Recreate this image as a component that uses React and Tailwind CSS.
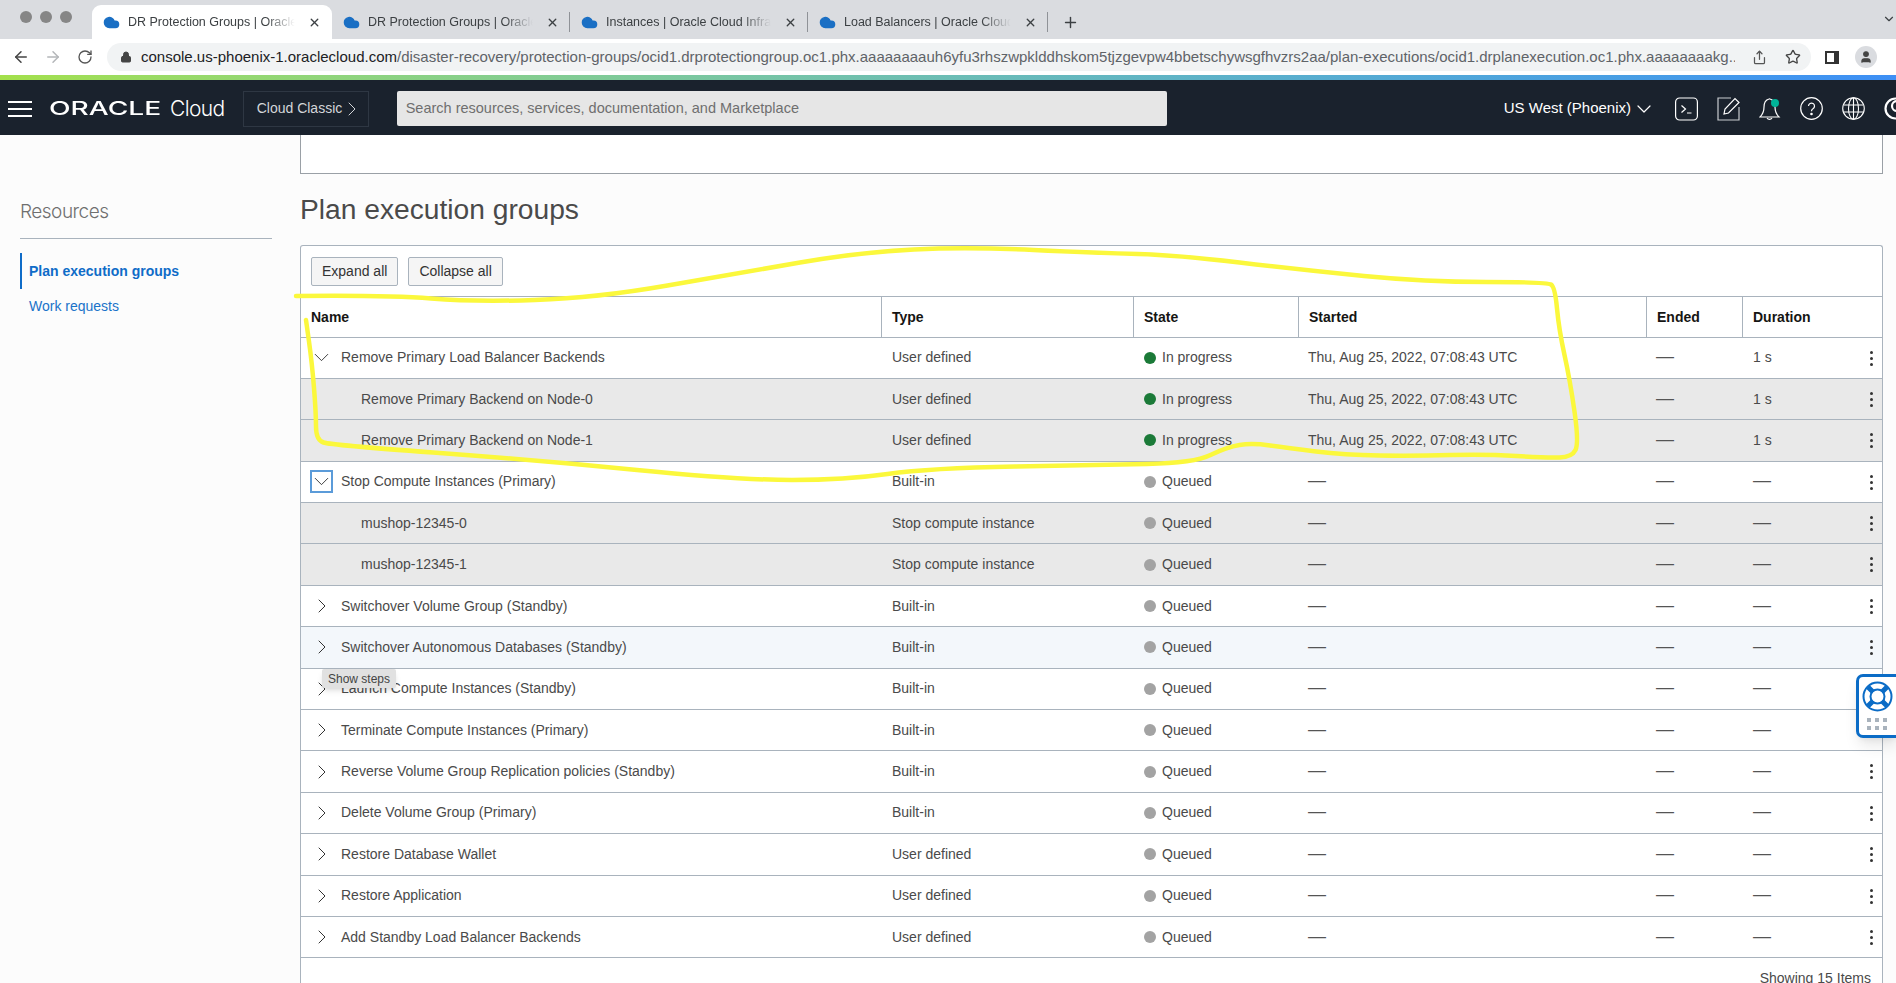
import React from "react"
import { ArrowLeft, ArrowRight, ChevronDown, ChevronRight, Cloud, Lock, Plus, RotateCw, Share, Star, User, X } from "lucide-react"

const sans = "font-['Liberation_Sans',Arial,sans-serif]"
const cols = "grid grid-cols-[580px_252px_165px_348px_96px_1fr]"

const groups = [
  { name: "Remove Primary Load Balancer Backends", type: "User defined", open: true, active: true },
  { name: "Remove Primary Backend on Node-0", type: "User defined", child: true, active: true },
  { name: "Remove Primary Backend on Node-1", type: "User defined", child: true, active: true },
  { name: "Stop Compute Instances (Primary)", type: "Built-in", open: true, focus: true },
  { name: "mushop-12345-0", type: "Stop compute instance", child: true },
  { name: "mushop-12345-1", type: "Stop compute instance", child: true },
  { name: "Switchover Volume Group (Standby)", type: "Built-in" },
  { name: "Switchover Autonomous Databases (Standby)", type: "Built-in", hover: true },
  { name: "Launch Compute Instances (Standby)", type: "Built-in" },
  { name: "Terminate Compute Instances (Primary)", type: "Built-in" },
  { name: "Reverse Volume Group Replication policies (Standby)", type: "Built-in" },
  { name: "Delete Volume Group (Primary)", type: "Built-in" },
  { name: "Restore Database Wallet", type: "User defined" },
  { name: "Restore Application", type: "User defined" },
  { name: "Add Standby Load Balancer Backends", type: "User defined" },
]

const tabs = [
  { title: "DR Protection Groups | Oracle Cloud", width: "w-[240px]", active: true },
  { title: "DR Protection Groups | Oracle Cloud", width: "w-[238px]", sep: true },
  { title: "Instances | Oracle Cloud Infrastructure", width: "w-[238px]", sep: true },
  { title: "Load Balancers | Oracle Cloud Infrastructure", width: "w-[240px]", sep: true },
]

// hand drawn marker line round the first rows
const marker = [
  [296, 296], [388, 295], [474, 302], [596, 298], [739, 273], [861, 252], [967, 247], [1100, 253], [1176, 255],
  [1303, 270], [1425, 282], [1547, 282], [1555, 287], [1559, 330], [1570, 380], [1579, 443], [1572, 457], [1547, 458],
  [1486, 454], [1415, 456], [1344, 455], [1288, 448], [1252, 443], [1227, 447], [1194, 463], [1100, 465], [930, 468],
  [845, 480], [739, 480], [535, 460], [331, 445], [316, 440], [316, 413], [312, 363], [306, 320],
]

const markerPath = () => {
  let d = `M${marker[0][0]} ${marker[0][1]}`
  for (let i = 1; i < marker.length - 1; i++) {
    const [x, y] = marker[i]
    const [nx, ny] = marker[i + 1]
    d += ` Q${x} ${y} ${(x + nx) / 2} ${(y + ny) / 2}`
  }
  const last = marker[marker.length - 1]
  return d + ` L${last[0]} ${last[1]}`
}

const Tab = ({ title, width, active, sep }) => (
  <div className={`${width} h-[34px] flex items-center pl-[11px] gap-[8px] rounded-t-[9px] ${active ? "bg-white" : ""}`}>
    <Cloud size={17} className="shrink-0 text-[#1a6fc4] fill-[#1a6fc4]" />
    <span className="flex-1 overflow-hidden whitespace-nowrap text-[12.5px] text-[#3c4043] [mask-image:linear-gradient(to_right,black_80%,transparent_97%)]">{title}</span>
    <X size={13} strokeWidth={2.5} className="shrink-0 text-[#3c4043]" />
    <span className={`w-px h-[20px] ml-[2px] ${sep ? "bg-[#8f9297]" : ""}`}></span>
  </div>
)

const Dash = () => <span className="text-[18px] leading-none text-[#555]">—</span>

const Kebab = () => (
  <div className="absolute right-[9px] top-[13px] flex flex-col gap-[3px]">
    <span className="size-[3px] rounded-full bg-[#333]"></span>
    <span className="size-[3px] rounded-full bg-[#333]"></span>
    <span className="size-[3px] rounded-full bg-[#333]"></span>
  </div>
)

const Row = ({ name, type, open, child, active, focus, hover }) => (
  <div className={`${cols} relative h-[41.4px] items-center border-b border-[#a9b3bd] text-[14px] text-[#4a4a4a] ${child ? "bg-[#e9e9e9]" : hover ? "bg-[#f3f7fb]" : ""}`}>
    <div className="flex items-center pl-[9px]">
      {child ? (
        <span className="pl-[51px]">{name}</span>
      ) : (
        <>
          <span className={`w-[23px] h-[23px] shrink-0 flex items-center justify-center text-[#333] ${focus ? "border-2 border-[#5b9bd9]" : ""}`}>
            {open ? <ChevronDown size={25} strokeWidth={0.9} className="shrink-0" /> : <ChevronRight size={24} strokeWidth={1} className="shrink-0" />}
          </span>
          <span className="pl-[8px]">{name}</span>
        </>
      )}
    </div>
    <div className="pl-[11px]">{type}</div>
    <div className="pl-[11px] flex items-center gap-[6px]">
      <span className={`size-[12px] rounded-full ${active ? "bg-[#1b7a38]" : "bg-[#a3a3a3]"}`}></span>
      {active ? "In progress" : "Queued"}
    </div>
    <div className="pl-[10px]">{active ? "Thu, Aug 25, 2022, 07:08:43 UTC" : <Dash />}</div>
    <div className="pl-[10px]"><Dash /></div>
    <div className="pl-[11px]">{active ? "1 s" : <Dash />}</div>
    <Kebab />
  </div>
)

const HeadCell = ({ children, first }) => (
  <div className={`h-full flex items-center pl-[10px] pt-[1px] ${first ? "" : "border-l border-[#a9b3bd]"}`}>{children}</div>
)

const NavIcons = () => (
  <div className="flex items-center gap-[19px] text-white [&>svg]:shrink-0">
    <svg width="23" height="24" viewBox="0 0 23 24" fill="none" stroke="currentColor" strokeWidth="1.2">
      <rect x="0.6" y="1" width="21.8" height="22" rx="4" />
      <path d="M6.5 8.5l4 3.5-4 3.5M12 16h4.5" />
    </svg>
    <svg width="23" height="25" viewBox="0 0 23 25" fill="none" stroke="currentColor" strokeWidth="1.2">
      <path d="M14 2H1v22h21V11" stroke="#c8ccd0" />
      <path d="M7 18l1-5L18 2.5l4 4L11.5 17z" />
    </svg>
    <svg width="22" height="26" viewBox="0 0 22 26" fill="none" stroke="currentColor" strokeWidth="1.2">
      <path d="M10 3c-4 1-5 4-5 8 0 4-1 7-4 10h19c-3-3-4-6-4-10 0-4-1-7-5-8a1 1 0 0 0-1 0z" />
      <path d="M8 22a3 3 0 0 0 5 0" />
      <circle cx="16" cy="7" r="4" fill="#00b398" stroke="none" />
    </svg>
    <svg width="23" height="23" viewBox="0 0 23 23" fill="none" stroke="currentColor" strokeWidth="1.2">
      <circle cx="11.5" cy="11.5" r="10.8" />
      <path d="M8.5 9a3 3 0 1 1 4.5 2.7c-1 .6-1.5 1.2-1.5 2.5" />
      <circle cx="11.5" cy="17" r=".7" fill="currentColor" />
    </svg>
    <svg width="23" height="23" viewBox="0 0 23 23" fill="none" stroke="currentColor" strokeWidth="1.1">
      <circle cx="11.5" cy="11.5" r="10.8" />
      <ellipse cx="11.5" cy="11.5" rx="5" ry="10.8" />
      <path d="M11.5 .7v21.6M1.5 8h20M1.5 15h20" />
    </svg>
    <svg width="23" height="23" viewBox="0 0 23 23" fill="none" stroke="currentColor" strokeWidth="2.2">
      <circle cx="11.5" cy="11.5" r="10" />
      <circle cx="13" cy="9" r="5" />
    </svg>
  </div>
)

const App = () => (
  <div className={`relative h-screen overflow-hidden flex flex-col bg-[#fcfcfc] ${sans}`}>
    {/* browser tabs */}
    <div className="h-[39px] shrink-0 bg-[#dadce0] flex items-end relative">
      <div className="w-[92px] h-[34px] pl-[20px] pb-[10px] flex items-center gap-[8px]">
        <span className="size-[12px] rounded-full bg-[#868686]"></span>
        <span className="size-[12px] rounded-full bg-[#868686]"></span>
        <span className="size-[12px] rounded-full bg-[#868686]"></span>
      </div>
      {tabs.map((t) => <Tab key={t.width + t.title} {...t} />)}
      <Plus size={17} strokeWidth={2} className="ml-[14px] mb-[8px] text-[#3c4043]" />
      <ChevronDown size={14} className="absolute right-[0px] top-[12px] text-[#3c4043]" />
    </div>

    {/* browser toolbar */}
    <div className="h-[36px] shrink-0 bg-white flex items-center pl-[12px] text-[#5f6368]">
      <ArrowLeft size={18} className="text-[#444]" />
      <ArrowRight size={18} className="ml-[14px] text-[#b4b6b9]" />
      <RotateCw size={16} className="ml-[15px] text-[#555]" />
      <div className="ml-[14px] w-[1704px] shrink-0 h-[28px] rounded-full bg-[#f1f3f4] flex items-center pl-[13px] pr-[10px]">
        <Lock size={12} className="text-[#444] fill-[#444] shrink-0" />
        <div className="ml-[9px] w-[1597px] text-[15px] whitespace-nowrap overflow-hidden text-[#5f6368]">
          <span className="text-[#202124]">console.us-phoenix-1.oraclecloud.com</span>/disaster-recovery/protection-groups/ocid1.drprotectiongroup.oc1.phx.aaaaaaaauh6yfu3rhszwpklddhskom5tjzgevpw4bbetschywsgfhvzrs2aa/plan-executions/ocid1.drplanexecution.oc1.phx.aaaaaaaakg...
        </div>
        <Share size={15} className="ml-[17px] text-[#555]" />
        <Star size={16} className="ml-[18px] text-[#444]" />
      </div>
      <div className="ml-[14px] w-[14px] h-[13px] border-2 border-[#333] border-r-[5px]"></div>
      <div className="ml-[16px] size-[22px] rounded-full bg-[#dadce0] flex items-center justify-center">
        <User size={14} className="text-[#444] fill-[#444]" />
      </div>
    </div>

    <div className="h-[5px] shrink-0 bg-gradient-to-r from-[#a3e04a] to-[#3d8ff5]"></div>

    {/* console header */}
    <div className="h-[55px] shrink-0 bg-[#1a222d] flex items-center pl-[8px] pt-[2px] text-white">
      <div className="w-[24px] flex flex-col gap-[5px]">
        <span className="h-[2px] bg-white"></span>
        <span className="h-[2px] bg-white"></span>
        <span className="h-[2px] bg-white"></span>
      </div>
      <span className="ml-[17px] w-[121px] font-['Inter'] text-[19px] font-medium leading-none origin-left scale-x-[1.48] whitespace-nowrap">ORACLE</span>
      <span className="font-['Inter'] font-light text-[21px] tracking-[-0.6px]">Cloud</span>
      <div className="ml-[18px] w-[126px] h-[36px] border border-[#2e3743] flex items-center pl-[13px] text-[14px] text-[#d3d6d9]">
        Cloud Classic <ChevronRight size={24} strokeWidth={1} className="-ml-[2px]" />
      </div>
      <div className="ml-[28px] w-[770px] h-[35px] rounded-[2px] bg-[#e6e6e6] flex items-center pl-[9px] text-[14.5px] text-[#6f6f6f]">
        Search resources, services, documentation, and Marketplace
      </div>
      <div className="ml-auto flex items-center whitespace-nowrap">
        <span className="text-[15px]">US West (Phoenix)</span>
        <ChevronDown size={24} strokeWidth={1.2} className="ml-[1px]" />
        <div className="ml-[19px] w-[221px]"><NavIcons /></div>
      </div>
    </div>

    <div className="flex-1 flex min-h-0">
      {/* resources menu */}
      <div className="w-[300px] shrink-0 pl-[20px] pr-[28px] pt-[64px]">
        <div className="text-[19px] leading-[26px] font-light text-[#6f6f6f] font-['Inter'] tracking-[-0.5px] pb-[13px] border-b border-[#a9b3bd]">Resources</div>
        <div className="mt-[14px] h-[36px] border-l-[2px] border-[#0f6cc8] pl-[7px] flex items-center text-[14px] font-bold text-[#0f6cc8]">Plan execution groups</div>
        <div className="mt-[7px] pl-[9px] text-[14px] text-[#1a73c9]">Work requests</div>
      </div>

      {/* plan execution */}
      <div className="flex-1 pr-[13px] min-w-0">
        <div className="h-[39px] bg-white border border-t-0 border-[#9aa0a6]"></div>
        <h1 className="mt-[17px] h-[36px] text-[28.2px] leading-[36px] text-[#4a4a4a]">Plan execution groups</h1>
        <div className="mt-[18px] bg-white border border-[#a9b3bd] border-b-0 rounded-t-[3px]">
          <div className="h-[50px] flex items-center pl-[10px] gap-[10px] text-[14px] text-[#333]">
            <button className="h-[29px] px-[10px] border border-[#a9b3bd] rounded-[2px] bg-[#f5f5f5]">Expand all</button>
            <button className="h-[29px] px-[10px] border border-[#a9b3bd] rounded-[2px] bg-[#f5f5f5]">Collapse all</button>
          </div>
          <div className={`${cols} h-[41.5px] items-center border-y border-[#a9b3bd] text-[14px] font-bold text-[#161513]`}>
            <HeadCell first>Name</HeadCell>
            <HeadCell>Type</HeadCell>
            <HeadCell>State</HeadCell>
            <HeadCell>Started</HeadCell>
            <HeadCell>Ended</HeadCell>
            <HeadCell>Duration</HeadCell>
          </div>
          {groups.map((g) => <Row key={g.name} {...g} />)}
          <div className="h-[40px] pt-[10px] pr-[11px] text-right text-[14px] text-[#4a4a4a]">Showing 15 Items</div>
        </div>
      </div>
    </div>

    {/* tooltip on the hovered row */}
    <div className="absolute left-[322px] top-[669px] w-[74px] h-[19px] rounded-[2px] bg-[#e1e1e1] shadow-md flex items-center justify-center text-[12px] text-[#444]">Show steps</div>

    {/* help widget */}
    <div className="absolute left-[1856px] top-[674px] w-[44px] h-[64px] bg-white border-[3px] border-[#0b6cc6] rounded-l-[7px] shadow-lg">
      <svg width="31" height="31" viewBox="0 0 31 31" className="absolute left-[2.5px] top-[3.5px]" fill="none">
        <circle cx="15.5" cy="15.5" r="14" stroke="#0b6cc6" strokeWidth="2" />
        <circle cx="15.5" cy="15.5" r="7" stroke="#0b6cc6" strokeWidth="2" />
        <path d="M6 6l5 5M25 6l-5 5M6 25l5-5M25 25l-5-5" stroke="#0b6cc6" strokeWidth="5" />
      </svg>
      <div className="absolute left-[8px] top-[41px] grid grid-cols-3 gap-[4px]">
        {[0, 1, 2, 3, 4, 5].map((i) => <span key={i} className="size-[4px] bg-[#a9b3bd]"></span>)}
      </div>
    </div>

    {/* marker annotation */}
    <svg width="1896" height="983" className="absolute left-0 top-0 pointer-events-none" fill="none">
      <path d={markerPath()} stroke="#fbf83c" strokeWidth="4.5" strokeLinecap="round" strokeLinejoin="round" />
    </svg>
  </div>
)

export default App
